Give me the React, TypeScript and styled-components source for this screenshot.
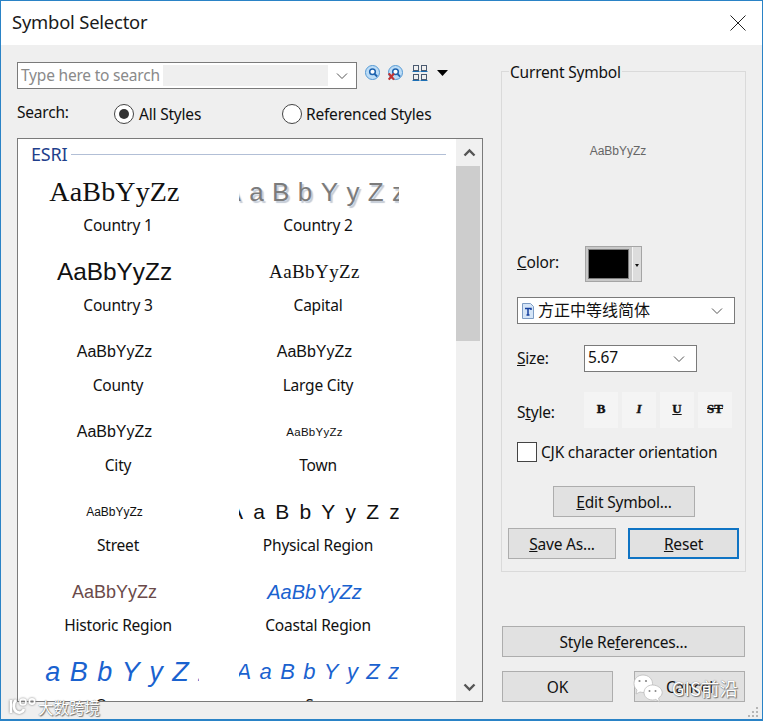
import React from "react";
import styled, { createGlobalStyle } from "styled-components";

const Global = createGlobalStyle`
  html, body { margin: 0; padding: 0; background: #efefef; }
  * { box-sizing: border-box; }
`;

const UI = `"Noto Sans", "Noto Sans CJK SC", sans-serif`;

const Window = styled.div`
  position: relative;
  width: 763px;
  height: 721px;
  overflow: hidden;
  display: flex;
  flex-direction: column;
  background: #efefef;
  border: 1px solid #2a83c6;
  border-bottom-width: 2px;
  font-family: ${UI};
  font-size: 15.5px;
  letter-spacing: -0.2px;
  color: #111;
`;

const TitleBar = styled.div`
  height: 44px;
  flex: none;
  background: #fff;
  display: flex;
  align-items: center;
  justify-content: space-between;
  padding: 0 16px 0 11px;
`;

const Title = styled.div`
  font-size: 18.4px;
  color: #1a1a1a;
  position: relative;
  top: -2px;
`;

const Body = styled.div`
  flex: 1;
  display: flex;
  min-height: 0;
`;

const Left = styled.div`
  width: 482px;
  flex: none;
  padding: 17px 0 0 16px;
  display: flex;
  flex-direction: column;
`;

const SearchRow = styled.div`
  display: flex;
  align-items: center;
  height: 27px;
`;

const Combo = styled.div`
  width: 340px;
  height: 27px;
  flex: none;
  border: 1px solid #7a7a7a;
  background: #fff;
  display: flex;
  align-items: stretch;
  padding: 2px 0 2px 2px;
`;

const Placeholder = styled.div`
  background: #fff;
  color: #8a8a8a;
  line-height: 20px;
  padding-left: 1px;
  width: 143px;
  white-space: nowrap;
`;

const Selection = styled.div`
  width: 165px;
  background: #efefef;
`;

const ChevronBox = styled.div`
  flex: 1;
  display: flex;
  align-items: center;
  justify-content: center;
`;

const Tools = styled.div`
  display: flex;
  align-items: flex-start;
  margin-left: 8px;
  position: relative;
  top: -2px;
`;

const ToolIcon = styled.svg<{ $gap?: number; $top?: number }>`
  display: block;
  flex: none;
  margin-right: ${(p) => p.$gap ?? 0}px;
  margin-top: ${(p) => p.$top ?? 0}px;
`;

const ScopeRow = styled.div`
  display: flex;
  align-items: center;
  height: 26px;
  margin-top: 12px;
`;

const ScopeLabel = styled.div`
  width: 97px;
  position: relative;
  top: -2px;
`;

const RadioLabel = styled.label<{ $width: number; $gap: number }>`
  display: flex;
  align-items: center;
  gap: ${(p) => p.$gap}px;
  width: ${(p) => p.$width}px;
  white-space: nowrap;
`;

const Radio = styled.span<{ $on?: boolean }>`
  width: 20px;
  height: 20px;
  border-radius: 50%;
  flex: none;
  border: 1px solid #444;
  background: #fff;
  display: flex;
  align-items: center;
  justify-content: center;
  &::after {
    content: "";
    display: ${(p) => (p.$on ? "block" : "none")};
    width: 10px;
    height: 10px;
    border-radius: 50%;
    background: #333;
  }
`;

const List = styled.div`
  margin-top: 11px;
  width: 466px;
  height: 564px;
  border: 1px solid #7a7a7a;
  background: #fff;
  display: flex;
  overflow: hidden;
`;

const ListContent = styled.div`
  width: 438px;
  flex: none;
  overflow: hidden;
`;

const GroupHead = styled.div`
  display: flex;
  align-items: center;
  height: 30px;
  padding-left: 13px;
  padding-right: 10px;
  gap: 4px;
  color: #1f3f8c;
  font-size: 18px;
  &::after {
    content: "";
    flex: 1;
    height: 1px;
    background: #b2bfd6;
  }
`;

const Grid = styled.div`
  display: grid;
  grid-template-columns: 200px 200px;
  grid-auto-rows: 80px;
`;

const Item = styled.div`
  display: flex;
  flex-direction: column;
  align-items: center;
`;

const SampleBox = styled.div<{ $nudge: number }>`
  width: 160px;
  height: 44px;
  flex: none;
  margin-left: 1px;
  padding-right: 8px;
  padding-left: ${(p) => p.$nudge}px;
  overflow: hidden;
  display: flex;
  align-items: center;
  justify-content: center;
  white-space: nowrap;
  position: relative;
  top: 1px;
`;

const Sample = styled.span<{
  $size: number;
  $font?: string;
  $spacing?: number;
  $color?: string;
  $italic?: boolean;
  $shadow?: boolean;
}>`
  flex: none;
  font-family: ${(p) => p.$font ?? `"Liberation Sans", sans-serif`};
  font-size: ${(p) => p.$size}px;
  letter-spacing: ${(p) => p.$spacing ?? 0}px;
  color: ${(p) => p.$color ?? "#111"};
  font-style: ${(p) => (p.$italic ? "italic" : "normal")};
  text-shadow: ${(p) => (p.$shadow ? "2px 2px 1px #c4cbd6" : "none")};
`;

const ItemLabel = styled.div`
  line-height: 22px;
  margin-top: 1px;
  white-space: nowrap;
`;

const Scrollbar = styled.div`
  flex: 1;
  background: #f0f0f0;
  display: flex;
  flex-direction: column;
  align-items: stretch;
`;

const ScrollArrow = styled.div`
  height: 27px;
  flex: none;
  display: flex;
  align-items: center;
  justify-content: center;
`;

const ScrollThumb = styled.div`
  height: 175px;
  width: 24px;
  background: #cdcdcd;
  flex: none;
`;

const ScrollTrack = styled.div`
  flex: 1;
`;

const Right = styled.div`
  flex: 1;
  padding: 16px 0 0 18px;
  display: flex;
  flex-direction: column;
  min-width: 0;
`;

const Group = styled.fieldset`
  margin: 0;
  padding: 0;
  width: 245px;
  height: 511px;
  flex: none;
  border: 1px solid #dadada;
  display: flex;
  flex-direction: column;
  min-width: 0;
`;

const Legend = styled.legend`
  margin-left: 7px;
  padding: 0 1px 0 1px;
  line-height: 20px;
`;

const LegendText = styled.span`
  position: relative;
  top: 1px;
`;

const Preview = styled.div`
  height: 140px;
  flex: none;
  display: flex;
  align-items: center;
  justify-content: center;
  padding-right: 11px;
  font-family: "Liberation Sans", sans-serif;
  font-size: 12px;
  letter-spacing: 0;
  color: #666;
`;

const FieldRow = styled.div<{ $mt: number; $h: number }>`
  display: flex;
  align-items: center;
  height: ${(p) => p.$h}px;
  margin-top: ${(p) => p.$mt}px;
  padding-left: 15px;
`;

const FieldLabel = styled.div<{ $w?: number; $lift?: number; $drop?: number }>`
  width: ${(p) => p.$w ?? 67}px;
  flex: none;
  padding-bottom: ${(p) => p.$lift ?? 0}px;
  padding-top: ${(p) => p.$drop ?? 0}px;
`;

const ColorButton = styled.div`
  width: 57px;
  height: 36px;
  flex: none;
  background: #c8c8c8;
  border: 1px solid #a5a5a5;
  padding: 2px;
  display: flex;
  align-items: stretch;
`;

const ColorSwatch = styled.div`
  width: 41px;
  background: #000;
  border: 1px solid #7c7c7c;
`;

const ColorDrop = styled.div`
  flex: 1;
  margin: -2px -2px -2px 3px;
  background: #dcdcdc;
  border-left: 1px solid #f5f5f5;
  display: flex;
  align-items: center;
  justify-content: center;
  &::after {
    content: "";
    border-left: 2.5px solid transparent;
    border-right: 2.5px solid transparent;
    border-top: 3px solid #111;
    margin-top: 3px;
  }
`;

const Select = styled.div<{ $w: number }>`
  width: ${(p) => p.$w}px;
  height: 27px;
  flex: none;
  border: 1px solid #7a7a7a;
  background: #fff;
  display: flex;
  align-items: center;
  padding: 0 11px 0 3px;
  gap: 3px;
  justify-content: space-between;
`;

const SelectText = styled.div<{ $lift?: number }>`
  flex: 1;
  line-height: 24px;
  white-space: nowrap;
  position: relative;
  top: ${(p) => -(p.$lift ?? 1)}px;
`;

const FontName = styled.span`
  font-family: "Noto Sans CJK SC", sans-serif;
  font-size: 16px;
  letter-spacing: 0;
`;

const StyleButtons = styled.div`
  display: flex;
  gap: 4px;
`;

const StyleButton = styled.div<{ $strike?: boolean; $under?: boolean; $italic?: boolean }>`
  width: 34px;
  height: 36px;
  background: #f4f4f4;
  display: flex;
  align-items: center;
  justify-content: center;
  font-family: "Liberation Serif", serif;
  font-weight: 700;
  font-size: 13px;
  letter-spacing: 0;
  -webkit-text-stroke: 0.4px #111;
  color: #111;
  padding-bottom: 3px;
  font-style: ${(p) => (p.$italic ? "italic" : "normal")};
  text-decoration: ${(p) => (p.$strike ? "line-through" : p.$under ? "underline" : "none")};
`;

const CheckBox = styled.span`
  width: 20px;
  height: 20px;
  flex: none;
  border: 1px solid #444;
  background: #fff;
  margin-right: 4px;
`;

const Button = styled.div<{ $w: number; $default?: boolean }>`
  width: ${(p) => p.$w}px;
  height: 31px;
  flex: none;
  background: #e1e1e1;
  border: ${(p) => (p.$default ? "2px solid #0f74c4" : "1px solid #adadad")};
  display: flex;
  align-items: center;
  justify-content: center;
  white-space: nowrap;
`;

const EditRow = styled.div`
  display: flex;
  justify-content: flex-start;
  margin-top: 24px;
  padding-left: 51px;
`;

const SaveRow = styled.div`
  display: flex;
  gap: 12px;
  margin-top: 11px;
  padding-left: 6px;
`;

const BottomRow = styled.div<{ $mt: number }>`
  display: flex;
  justify-content: space-between;
  width: 243px;
  margin-top: ${(p) => p.$mt}px;
  margin-left: 1px;
`;

const WeChatMark = styled.div`
  position: absolute;
  right: 24px;
  bottom: 16px;
  display: flex;
  align-items: center;
  gap: 9px;
  pointer-events: none;
`;

const MarkText = styled.span<{ $size: number }>`
  font-family: "Noto Sans CJK SC", "Noto Sans", sans-serif;
  font-size: ${(p) => p.$size}px;
  letter-spacing: 0;
  line-height: 1.2;
  color: #fff;
  white-space: nowrap;
  text-shadow: 0 0 1px #555, 1px 1px 1px #777;
`;

const BrandMark = styled.div`
  position: absolute;
  left: 7px;
  bottom: 2px;
  display: flex;
  align-items: center;
  gap: 0;
  pointer-events: none;
`;

const BrandLogo = styled.svg`
  filter: drop-shadow(0 0 1px #777);
`;

const Grip = styled.svg`
  position: absolute;
  right: 3px;
  bottom: 1px;
`;

const Chevron = ({ color = "#555" }: { color?: string }) => (
  <svg width="12" height="8" viewBox="0 0 12 8">
    <path d="M1 1.5 L6 6.5 L11 1.5" fill="none" stroke={color} strokeWidth="1" />
  </svg>
);

const ScrollChevron = ({ up }: { up?: boolean }) => (
  <svg width="13" height="9" viewBox="0 0 13 9">
    <path d={up ? "M1.5 7.5 L6.5 2.5 L11.5 7.5" : "M1.5 1.5 L6.5 6.5 L11.5 1.5"} fill="none" stroke="#555" strokeWidth="2.4" />
  </svg>
);

const Lens = () => (
  <>
    <circle cx="8" cy="8" r="7.5" fill="#bcdcf6" stroke="#4f95d2" strokeWidth="1" />
    <circle cx="8" cy="7.2" r="3" fill="#fff" stroke="#1d62ae" strokeWidth="1.6" />
    <path d="M10.2 9.6 L13 12.3" stroke="#1d62ae" strokeWidth="2" />
  </>
);

const SearchIcon = () => (
  <ToolIcon width="15" height="15" viewBox="0 0 16 16" $gap={8}>
    <Lens />
  </ToolIcon>
);

const ClearIcon = () => (
  <ToolIcon width="15" height="16" viewBox="0 0 16 17" $gap={9}>
    <Lens />
    <path d="M0.8 9 L6.4 15.5 M6.4 9 L0.8 15.5" stroke="#c23232" strokeWidth="2.2" />
  </ToolIcon>
);

const ViewIcon = () => (
  <ToolIcon width="16" height="17" viewBox="0 0 16 17" $gap={9}>
    <rect x="1.5" y="0.5" width="5" height="5" fill="none" stroke="#4a5a70" />
    <rect x="9.5" y="0.5" width="5" height="5" fill="none" stroke="#4a5a70" />
    <path d="M0.5 6.5 H7.5 M8.5 6.5 H15.5" stroke="#1c6fb5" />
    <rect x="1.5" y="9.5" width="5" height="5" fill="none" stroke="#4a5a70" />
    <rect x="9.5" y="9.5" width="5" height="5" fill="none" stroke="#4a5a70" />
    <path d="M0.5 15.5 H7.5 M8.5 15.5 H15.5" stroke="#1c6fb5" />
  </ToolIcon>
);

const DropArrow = () => (
  <ToolIcon width="11" height="6" viewBox="0 0 11 6" $top={5}>
    <path d="M0 0 H11 L5.5 6 Z" fill="#000" />
  </ToolIcon>
);

const FontFileIcon = () => (
  <svg width="14" height="16" viewBox="0 0 14 16">
    <path d="M1.5 0.5 H9.5 L12.5 3.5 V15.5 H1.5 Z" fill="#d5e5f7" stroke="#7d9cc4" />
    <path d="M4 5.5 H10 V7 M7 5.5 V12 M5.5 12 H8.5" fill="none" stroke="#143f9e" strokeWidth="1.5" />
  </svg>
);

const WeChatIcon = () => (
  <svg width="30" height="29" viewBox="0 0 30 29">
    <path d="M10 1 C4.5 1 1 5 1 9.5 C1 12.5 2.3 14.5 4 16 L3 20 L7 18 C8.3 18.4 9.5 18.5 11 18.5 C15.5 18.5 19.5 14 19.5 9.5 C19.5 5 15.5 1 10 1 Z" fill="#fff" stroke="#bbb" strokeWidth="0.8" />
    <path d="M19.5 11 C14.5 11 11 14.5 11 18.5 C11 22.5 14.5 26 19.5 26 C20.7 26 21.7 25.8 22.8 25.4 L26.5 28 L25.6 24 C27.8 22.6 29.2 20.7 29.2 18.5 C29.2 14.5 24.5 11 19.5 11 Z" fill="#fff" stroke="#bbb" strokeWidth="0.8" />
    <circle cx="6.5" cy="7" r="1.1" fill="#888" />
    <circle cx="13" cy="7" r="1.1" fill="#888" />
    <circle cx="16.5" cy="17" r="1" fill="#888" />
    <circle cx="22.5" cy="17" r="1" fill="#888" />
  </svg>
);

const BrandIcon = () => (
  <BrandLogo width="30" height="20" viewBox="0 0 30 20">
    <path d="M3 3 V16 M8 3 C5 6 5 13 9 15 C12 16.5 15 15 16 12" fill="none" stroke="#fff" strokeWidth="2.6" />
    <circle cx="15" cy="5" r="3" fill="none" stroke="#fff" strokeWidth="1.6" />
    <circle cx="24" cy="4.5" r="2.6" fill="none" stroke="#fff" strokeWidth="1.6" />
  </BrandLogo>
);

const SERIF = `"Liberation Serif", serif`;

type Entry = {
  label: string;
  size: number;
  font?: string;
  spacing?: number;
  color?: string;
  italic?: boolean;
  shadow?: boolean;
  nudge?: number;
};

const BLUE = "#1a62cf";

const entries: Entry[] = [
  { label: "Country 1", size: 28, font: SERIF, spacing: 0.15 },
  { label: "Country 2", size: 26, spacing: 8.4, color: "#7b7b7b", shadow: true, nudge: 8 },
  { label: "Country 3", size: 24.4 },
  { label: "Capital", size: 19, font: SERIF, spacing: 0.4 },
  { label: "County", size: 16 },
  { label: "Large City", size: 16 },
  { label: "City", size: 16 },
  { label: "Town", size: 11.5, spacing: 0.25 },
  { label: "Street", size: 12 },
  { label: "Physical Region", size: 21, spacing: 10.2, nudge: 10 },
  { label: "Historic Region", size: 18, color: "#6b4a4a" },
  { label: "Coastal Region", size: 20, italic: true, color: BLUE },
  { label: "Ocean", size: 27, italic: true, color: BLUE, spacing: 9.5, nudge: 10 },
  { label: "Sea", size: 22, italic: true, color: BLUE, spacing: 8.4, nudge: 15 },
];

export default function App() {
  return (
    <Window>
      <Global />
      <TitleBar>
        <Title>Symbol Selector</Title>
        <svg width="16" height="16" viewBox="0 0 16 16">
          <path d="M0.5 0.5 L15.5 15.5 M15.5 0.5 L0.5 15.5" stroke="#222" strokeWidth="1" />
        </svg>
      </TitleBar>
      <Body>
        <Left>
          <SearchRow>
            <Combo>
              <Placeholder>Type here to search</Placeholder>
              <Selection />
              <ChevronBox>
                <Chevron />
              </ChevronBox>
            </Combo>
            <Tools>
              <SearchIcon />
              <ClearIcon />
              <ViewIcon />
              <DropArrow />
            </Tools>
          </SearchRow>
          <ScopeRow>
            <ScopeLabel>Search:</ScopeLabel>
            <RadioLabel $width={168} $gap={5}>
              <Radio $on />
              All Styles
            </RadioLabel>
            <RadioLabel $width={170} $gap={4}>
              <Radio />
              Referenced Styles
            </RadioLabel>
          </ScopeRow>
          <List>
            <ListContent>
              <GroupHead>ESRI</GroupHead>
              <Grid>
                {entries.map((e) => (
                  <Item key={e.label}>
                    <SampleBox $nudge={e.nudge ?? 0}>
                      <Sample
                        $size={e.size}
                        $font={e.font}
                        $spacing={e.spacing}
                        $color={e.color}
                        $italic={e.italic}
                        $shadow={e.shadow}
                      >
                        AaBbYyZz
                      </Sample>
                    </SampleBox>
                    <ItemLabel>{e.label}</ItemLabel>
                  </Item>
                ))}
              </Grid>
            </ListContent>
            <Scrollbar>
              <ScrollArrow>
                <ScrollChevron up />
              </ScrollArrow>
              <ScrollThumb />
              <ScrollTrack />
              <ScrollArrow>
                <ScrollChevron />
              </ScrollArrow>
            </Scrollbar>
          </List>
        </Left>
        <Right>
          <Group>
            <Legend>
              <LegendText>Current Symbol</LegendText>
            </Legend>
            <Preview>AaBbYyZz</Preview>
            <FieldRow $mt={25} $h={36}>
              <FieldLabel $w={68} $lift={4}>
                <u>C</u>olor:
              </FieldLabel>
              <ColorButton>
                <ColorSwatch />
                <ColorDrop />
              </ColorButton>
            </FieldRow>
            <FieldRow $mt={15} $h={27}>
              <Select $w={218}>
                <FontFileIcon />
                <SelectText>
                  <FontName>方正中等线简体</FontName>
                </SelectText>
                <Chevron />
              </Select>
            </FieldRow>
            <FieldRow $mt={21} $h={27}>
              <FieldLabel $lift={2}>
                <u>S</u>ize:
              </FieldLabel>
              <Select $w={113}>
                <SelectText $lift={2}>5.67</SelectText>
                <Chevron />
              </Select>
            </FieldRow>
            <FieldRow $mt={20} $h={36}>
              <FieldLabel $drop={3}>
                S<u>t</u>yle:
              </FieldLabel>
              <StyleButtons>
                <StyleButton>B</StyleButton>
                <StyleButton $italic>I</StyleButton>
                <StyleButton $under>U</StyleButton>
                <StyleButton $strike>ST</StyleButton>
              </StyleButtons>
            </FieldRow>
            <FieldRow $mt={14} $h={20}>
              <CheckBox />
              CJK character orientation
            </FieldRow>
            <EditRow>
              <Button $w={142}>
                <span>
                  <u>E</u>dit Symbol...
                </span>
              </Button>
            </EditRow>
            <SaveRow>
              <Button $w={108}>
                <span>
                  <u>S</u>ave As...
                </span>
              </Button>
              <Button $w={111} $default>
                <span>
                  <u>R</u>eset
                </span>
              </Button>
            </SaveRow>
          </Group>
          <BottomRow $mt={54}>
            <Button $w={243}>
              <span>
                Style Re<u>f</u>erences...
              </span>
            </Button>
          </BottomRow>
          <BottomRow $mt={14}>
            <Button $w={111}>OK</Button>
            <Button $w={111}>Cancel</Button>
          </BottomRow>
        </Right>
      </Body>
      <Grip width="12" height="12" viewBox="0 0 12 12">
        <path d="M9 1 h2 v2 h-2 Z M5 5 h2 v2 h-2 Z M9 5 h2 v2 h-2 Z M1 9 h2 v2 h-2 Z M5 9 h2 v2 h-2 Z M9 9 h2 v2 h-2 Z" fill="#b5b5b5" />
      </Grip>
      <WeChatMark>
        <WeChatIcon />
        <MarkText $size={18.5}>GIS前沿</MarkText>
      </WeChatMark>
      <BrandMark>
        <BrandIcon />
        <MarkText $size={15.5}>大数跨境</MarkText>
      </BrandMark>
    </Window>
  );
}
